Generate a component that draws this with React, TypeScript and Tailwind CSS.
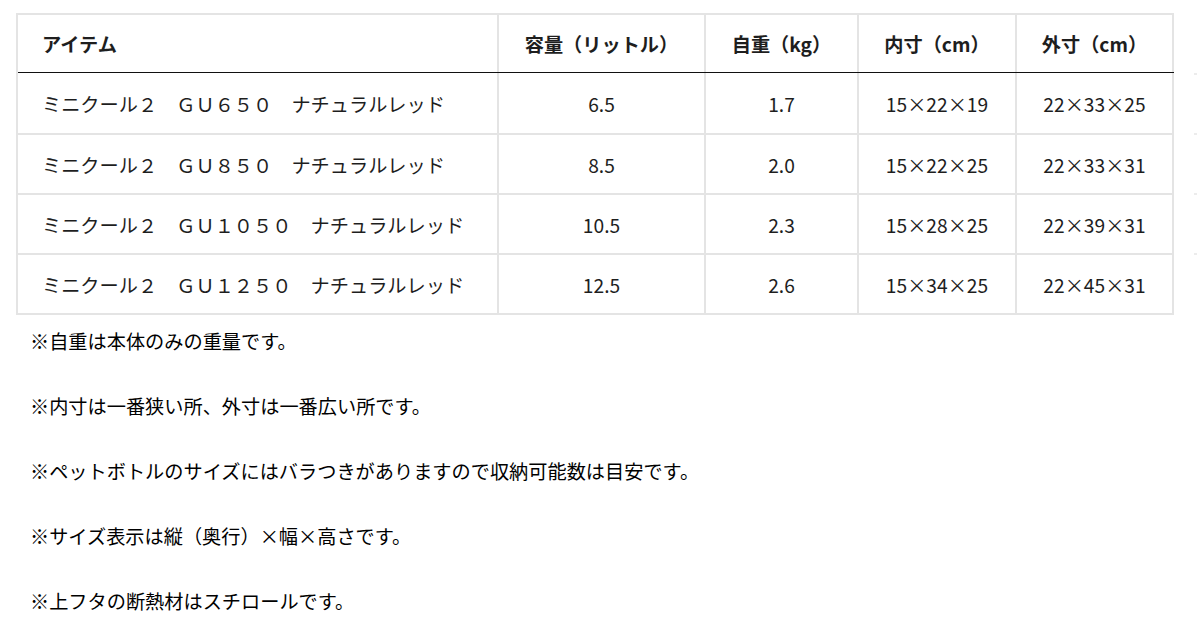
import React from "react";

const cols = ["w-[481px]", "w-[207px]", "w-[153px]", "w-[158px]", "w-[157px]"];

const header = ["アイテム", "容量（リットル）", "自重（kg）", "内寸（cm）", "外寸（cm）"];

const rows = [
  ["ミニクール２　ＧＵ６５０　ナチュラルレッド", "6.5", "1.7", "15×22×19", "22×33×25"],
  ["ミニクール２　ＧＵ８５０　ナチュラルレッド", "8.5", "2.0", "15×22×25", "22×33×31"],
  ["ミニクール２　ＧＵ１０５０　ナチュラルレッド", "10.5", "2.3", "15×28×25", "22×39×31"],
  ["ミニクール２　ＧＵ１２５０　ナチュラルレッド", "12.5", "2.6", "15×34×25", "22×45×31"],
];

const notes = [
  "※自重は本体のみの重量です。",
  "※内寸は一番狭い所、外寸は一番広い所です。",
  "※ペットボトルのサイズにはバラつきがありますので収納可能数は目安です。",
  "※サイズ表示は縦（奥行）×幅×高さです。",
  "※上フタの断熱材はスチロールです。",
];

export default function App() {
  return (
    <div
      className="w-[1197px] h-[634px] overflow-hidden bg-white text-[#1e1e1e]"
      style={{ fontFamily: '"Noto Sans CJK JP", "Noto Sans", sans-serif' }}
    >
      <div className="flex pt-[13px]">
        <div className="ml-[16px] w-[1158px] shrink-0 border-t-2 border-l-2 border-[#e4e4e4]">
          <div className="flex border-b border-[#111]">
            {header.map((h, i) => (
              <div
                key={i}
                className={`${cols[i]} h-[57px] shrink-0 border-r-2 border-[#e4e4e4] flex items-center pt-[2px] text-[19.2px] font-bold ${
                  i === 0 ? "pl-[24px]" : "justify-center"
                }`}
              >
                {h}
              </div>
            ))}
          </div>
          {rows.map((r, ri) => (
            <div key={ri} className="flex">
              {r.map((c, i) => (
                <div
                  key={i}
                  className={`${cols[i]} ${ri === 0 ? "h-[62px]" : "h-[60px]"} shrink-0 border-r-2 border-b-2 border-[#e4e4e4] flex items-center pt-[2px] text-[19.2px] ${
                    i === 0 ? "pl-[24px]" : "justify-center"
                  }`}
                >
                  {c}
                </div>
              ))}
            </div>
          ))}
        </div>
        <div className="ml-[20px] w-[40px] shrink-0 pt-[60px]">
          {[0, 1, 2, 3].map((k) => (
            <div key={k} className="h-[60px] border-t-2 border-[#ececec]" />
          ))}
        </div>
      </div>
      <div className="pl-[30px] pt-[11px] flex flex-col gap-[35px]">
        {notes.map((n, i) => (
          <p key={i} className="leading-[30px] text-[19.2px] font-normal text-black">
            {n}
          </p>
        ))}
      </div>
    </div>
  );
}
